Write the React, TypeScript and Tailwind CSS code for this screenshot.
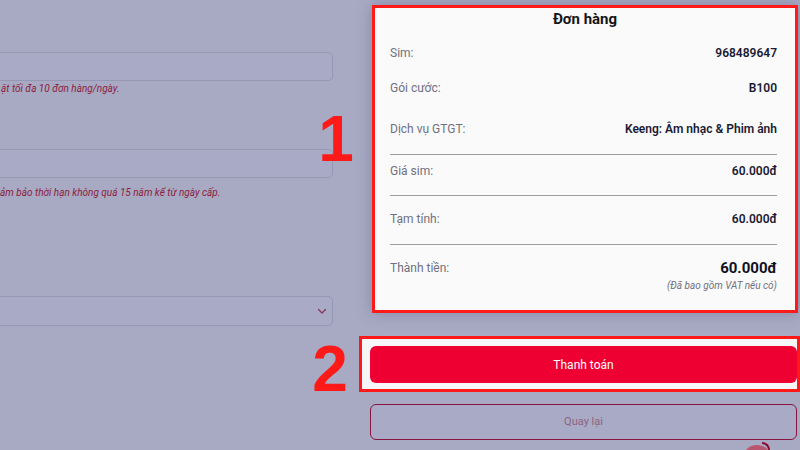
import React from "react";

const Row = ({ label, value, className = "" }: { label: string; value: string; className?: string }) => (
  <div className={`flex items-center justify-between leading-[16px] text-[12px] ${className}`}>
    <span className="text-[#6f7080]">{label}</span>
    <span className="font-semibold text-[#1b1a33]">{value}</span>
  </div>
);

const Divider = ({ className = "" }: { className?: string }) => (
  <div className={`h-px bg-[#9d9d9d] ${className}`} />
);

export default function App() {
  return (
    <div
      className="relative w-[800px] h-[450px] overflow-hidden bg-[#a8a9c3] flex"
      style={{ fontFamily: "Roboto, 'Noto Sans', sans-serif" }}
    >
      {/* Left form column */}
      <div className="w-[333px] shrink-0 pt-[52px]">
        <div className="-ml-[10px] h-[29px] rounded-[5px] border border-[#9697b2] bg-[#a9aac5]" />
        <p className="mt-[2px] text-[10px] leading-[12px] italic text-[#8c1c40] whitespace-nowrap pl-px">
          ặt tối đa 10 đơn hàng/ngày.
        </p>
        <div className="mt-[54px] -ml-[10px] h-[29px] rounded-[5px] border border-[#9697b2] bg-[#a9aac5]" />
        <p className="mt-[9px] text-[10px] leading-[12px] italic text-[#8c1c40] whitespace-nowrap">
          ảm bảo thời hạn không quá 15 năm kể từ ngày cấp.
        </p>
        <div className="mt-[97px] -ml-[10px] h-[30px] rounded-[5px] border border-[#9697b2] bg-[#a9aac5] flex items-center justify-end pr-[5px]">
          <svg width="10" height="7" viewBox="0 0 10 7" fill="none">
            <polyline points="1.5,1.5 5,5 8.5,1.5" stroke="#8a3558" strokeWidth="1.3" strokeLinecap="round" strokeLinejoin="round" />
          </svg>
        </div>
      </div>

      <div className="w-[26px] shrink-0" />

      {/* Right column */}
      <div className="w-[441px] shrink-0 flex flex-col">
        <div className="ml-[13px] mt-[5px] w-[426px] h-[308px] border-[3px] border-[#ff1a1a] bg-[#fafafa] shadow-[0_0_14px_rgba(70,70,110,0.35)] pl-[15px] pr-[18px]">
          <h2 className="pt-px text-center text-[15px] leading-[20px] font-bold text-[#151515] pl-[3px]">Đơn hàng</h2>
          <Row className="mt-[16px]" label="Sim:" value="968489647" />
          <Row className="mt-[19px]" label="Gói cước:" value="B100" />
          <Row className="mt-[25px]" label="Dịch vụ GTGT:" value="Keeng: Âm nhạc & Phim ảnh" />
          <Divider className="mt-[17px]" />
          <Row className="mt-[8px]" label="Giá sim:" value="60.000đ" />
          <Divider className="mt-[16px]" />
          <Row className="mt-[15px]" label="Tạm tính:" value="60.000đ" />
          <Divider className="mt-[17px]" />
          <div className="mt-[15px] flex items-center justify-between leading-[16px]">
            <span className="text-[12px] text-[#6f7080]">Thành tiền:</span>
            <span className="text-[15px] font-bold text-[#111122]">60.000đ</span>
          </div>
          <p className="mt-[4px] text-right text-[10px] leading-[12px] italic text-[#707080]">
            (Đã bao gồm VAT nếu có)
          </p>
        </div>

        <div className="mt-[23px] h-[56px] w-[441px] border-[3px] border-[#ff1a1a] bg-[#f6f6f8] pl-[8px] pt-[7px]">
          <button className="w-[427px] h-[37px] rounded-[6px] bg-[#ee0033] text-white text-[12px]">
            Thanh toán
          </button>
        </div>

        <button className="mt-[12px] ml-[11px] w-[427px] h-[36px] rounded-[6px] border-[1.5px] border-[#861640] bg-[#a9aac5] text-[11px] text-[#8a6580]">
          Quay lại
        </button>
      </div>

      {/* Annotation numbers */}
      <div
        className="absolute left-[318px] top-[107px] w-[36px] text-center text-[64px] leading-none font-bold text-[#ff1a1a]"
        style={{ fontFamily: "'Liberation Sans', Arial, sans-serif" }}
      >
        1
      </div>
      <div
        className="absolute left-[312px] top-[337px] w-[36px] text-center text-[64px] leading-none font-bold text-[#ff1a1a]"
        style={{ fontFamily: "'Liberation Sans', Arial, sans-serif" }}
      >
        2
      </div>

      {/* cursor fragment */}
      <div className="absolute left-[742px] top-[445px] w-[30px] h-[20px] rounded-t-full bg-[#b8566f]" />
      <div className="absolute left-[762px] top-[442px] w-[8px] h-[10px] rounded-tr-full border-t-2 border-r-2 border-[#8a0f30]" />
    </div>
  );
}
